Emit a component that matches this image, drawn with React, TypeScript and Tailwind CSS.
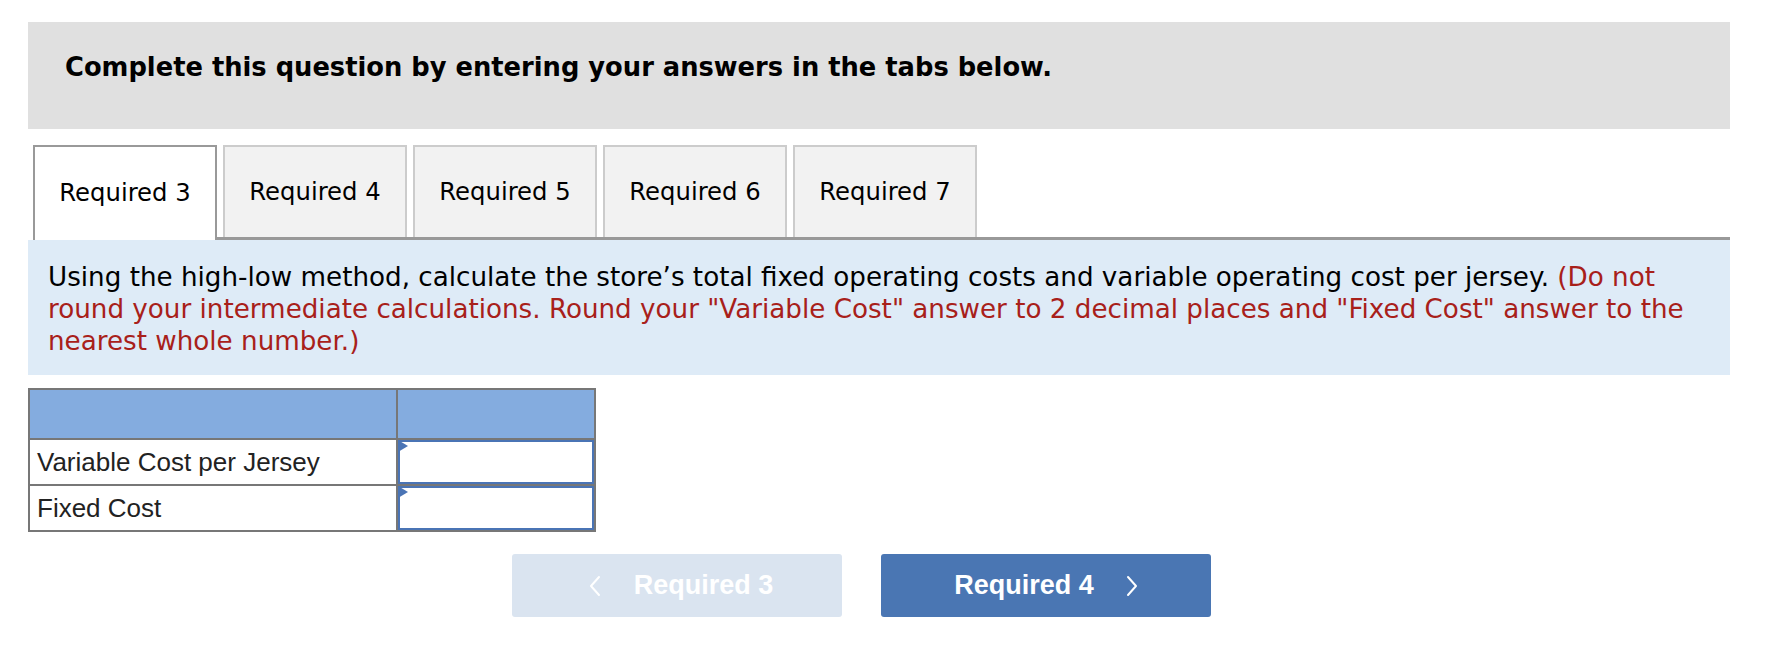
import React from "react";

const verdana = "font-['Verdana','DejaVu_Sans',sans-serif]";
const arial = "font-['Arial','Liberation_Sans',sans-serif]";

const tabs = ["Required 4", "Required 5", "Required 6", "Required 7"];

function Chevron({ dir }: { dir: "left" | "right" }) {
  return (
    <svg width="12" height="22" viewBox="0 0 12 22" fill="none" className="shrink-0">
      <polyline
        points={dir === "left" ? "10,2 2,11 10,20" : "2,2 10,11 2,20"}
        stroke="white"
        strokeWidth="2"
        strokeLinecap="round"
        strokeLinejoin="round"
      />
    </svg>
  );
}

function AnswerCell() {
  return (
    <td className="relative h-[46px] border-2 border-[#777] p-0">
      <div className="absolute inset-0 border-2 border-[#4a74b5] bg-white" />
      {/* 입력칸 왼쪽 위 작은 삼각형 */}
      <div className="absolute left-0 top-0 h-0 w-0 border-y-[6px] border-l-[10px] border-y-transparent border-l-[#4a74b5]" />
    </td>
  );
}

export default function App() {
  return (
    <div className="min-h-[660px] w-[1788px] bg-white pl-[28px] pt-[22px] text-black">
      <div className="w-[1702px]">
        <div className={`h-[107px] bg-[#e0e0e0] pl-[37px] pt-[26px] text-[25.75px] font-bold ${verdana}`}>
          Complete this question by entering your answers in the tabs below.
        </div>

        <div className={`mt-[16px] flex h-[95px] pl-[5px] text-[24.3px] ${verdana}`}>
          <div className="flex w-[184px] items-center justify-center border-2 border-b-0 border-[#999] bg-white">
            Required 3
          </div>
          <div className="flex flex-1 gap-[6px] border-b-[3px] border-[#999] pl-[6px]">
            {tabs.map((t) => (
              <div
                key={t}
                className="flex w-[184px] items-center justify-center border-2 border-b-0 border-[#ccc] bg-[#f2f2f2]"
              >
                {t}
              </div>
            ))}
          </div>
        </div>

        <div className={`h-[135px] bg-[#deebf7] pb-[18px] pl-[20px] pr-[30px] pt-[21px] text-[26.2px] leading-[32px] ${verdana}`}>
          Using the high-low method, calculate the store’s total fixed operating costs and variable operating cost per
          jersey.{" "}
          <span className="text-[#a8201a]">
            (Do not round your intermediate calculations. Round your "Variable Cost" answer to 2 decimal places and
            "Fixed Cost" answer to the nearest whole number.)
          </span>
        </div>

        <table className={`mt-[13px] w-[568px] border-collapse text-[26px] ${arial}`}>
          <tbody>
            <tr className="h-[50px] bg-[#84acdf]">
              <td className="w-[368px] border-2 border-[#777]" />
              <td className="border-2 border-[#777]" />
            </tr>
            <tr>
              <td className="h-[46px] border-2 border-[#777] pl-[7px] text-[#222]">Variable Cost per Jersey</td>
              <AnswerCell />
            </tr>
            <tr>
              <td className="h-[46px] border-2 border-[#777] pl-[7px] text-[#222]">Fixed Cost</td>
              <AnswerCell />
            </tr>
          </tbody>
        </table>

        <div className={`ml-[484px] mt-[22px] flex gap-[39px] text-[27px] font-bold text-white ${arial}`}>
          <button className="flex h-[63px] w-[330px] items-center justify-center gap-[33px] rounded-[3px] bg-[#dae4f0] pl-[8px]">
            <Chevron dir="left" />
            Required 3
          </button>
          <button className="flex h-[63px] w-[330px] items-center justify-center gap-[32px] rounded-[3px] bg-[#4a76b3]">
            Required 4
            <Chevron dir="right" />
          </button>
        </div>
      </div>
    </div>
  );
}
